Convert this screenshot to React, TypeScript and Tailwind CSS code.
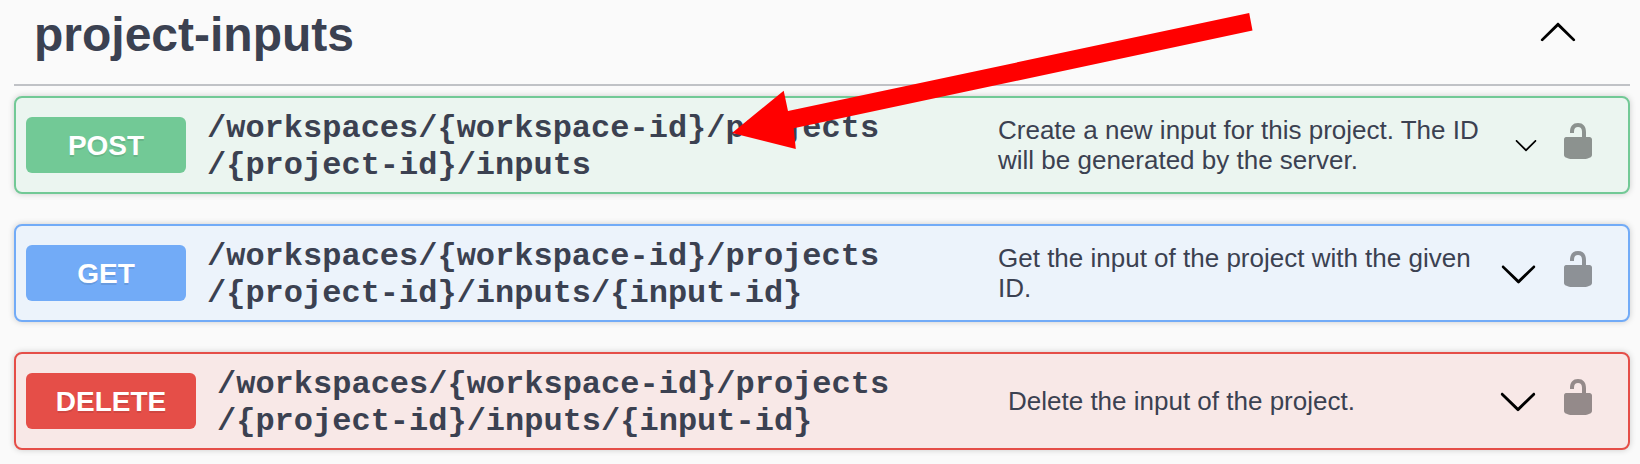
const CHEVRON_DOWN =
  'M17.418 6.109c.272-.268.709-.268.979 0s.271.701 0 .969l-7.908 7.83c-.27.268-.707.268-.979 0l-7.908-7.83c-.27-.268-.27-.701 0-.969.271-.268.709-.268.979 0L10 13.25l7.418-7.141z';
const CHEVRON_UP =
  'M17.418 14.908c.272.268.709.268.979 0s.271-.701 0-.969l-7.908-7.83c-.27-.268-.707-.268-.979 0l-7.908 7.83c-.27.268-.27.701 0 .969.271.268.709.268.979 0L10 7.767l7.418 7.141z';
const UNLOCKED =
  'M15.8 8H14V5.6C14 2.703 12.665 1 10 1 7.334 1 6 2.703 6 5.6V6h2v-.801C8 3.754 8.797 3 10 3c1.203 0 2 .754 2 2.199V8H4c-.553 0-1 .646-1 1.199V17c0 .549.428 1.139.951 1.307l1.197.387C5.672 18.861 6.55 19 7.1 19h5.8c.549 0 1.428-.139 1.951-.307l1.196-.387c.524-.167.953-.757.953-1.306V9.199C17 8.646 16.352 8 15.8 8z';

function Icon({ d, className }: { d: string; className: string }) {
  return (
    <svg viewBox="0 0 20 20" className={`shrink-0 fill-black ${className}`} aria-hidden="true">
      <path d={d} />
    </svg>
  );
}

interface Operation {
  method: string;
  path: string[];
  summary: string[];
  card: string;
  badge: string;
  chevron: string;
}

const OPERATIONS: Operation[] = [
  {
    method: 'POST',
    path: ['/workspaces/{workspace-id}/projects', '/{project-id}/inputs'],
    summary: ['Create a new input for this project. The ID', 'will be generated by the server.'],
    card: 'border-[#72c996] bg-[#ebf5f0]',
    badge: 'w-40 bg-[#72c996]',
    chevron: 'size-6 mr-5',
  },
  {
    method: 'GET',
    path: ['/workspaces/{workspace-id}/projects', '/{project-id}/inputs/{input-id}'],
    summary: ['Get the input of the project with the given', 'ID.'],
    card: 'border-[#72abf7] bg-[#ecf3fb]',
    badge: 'w-40 bg-[#72abf7]',
    chevron: 'size-[39px] mr-5',
  },
  {
    method: 'DELETE',
    path: ['/workspaces/{workspace-id}/projects', '/{project-id}/inputs/{input-id}'],
    summary: ['Delete the input of the project.'],
    card: 'border-[#e54e48] bg-[#f8e8e7]',
    badge: 'w-[170px] bg-[#e54e48]',
    chevron: 'size-10 mr-5',
  },
];

function OperationRow({ op }: { op: Operation }) {
  return (
    <div
      className={`flex h-[98px] items-center rounded-lg border-2 pl-2.5 pr-[30px] shadow-[0_0_6px_rgba(0,0,0,0.19)] ${op.card}`}
    >
      <span
        className={`flex h-14 shrink-0 items-center justify-center rounded-md pt-0.5 text-[28px] leading-8 font-bold text-white [text-shadow:0_2px_0_rgba(0,0,0,0.1)] ${op.badge}`}
      >
        {op.method}
      </span>
      <span className="ml-[21px] w-[791px] shrink-0 pt-[3px] font-['Liberation_Mono',monospace] text-[32px] leading-[37px] font-bold whitespace-nowrap">
        {op.path.map((line) => (
          <span key={line} className="block">{line}</span>
        ))}
      </span>
      <span className="grow text-[26px] leading-[30px] whitespace-nowrap">
        {op.summary.map((line) => (
          <span key={line} className="block">{line}</span>
        ))}
      </span>
      <Icon d={CHEVRON_DOWN} className={op.chevron} />
      <Icon d={UNLOCKED} className="mb-2 size-10 opacity-40" />
    </div>
  );
}

export default function App() {
  return (
    <main className="relative h-[464px] w-[1640px] overflow-hidden bg-[#fafafa] pr-2.5 pl-3.5 font-['Liberation_Sans',Arial,sans-serif] text-[#3b4151]">
      <header className="mb-2.5 flex h-[86px] items-start justify-between border-b-2 border-[#3b4151]/30 pt-[7px] pr-[52px] pl-5">
        <h1 className="text-[48px] leading-[56px] font-bold">project-inputs</h1>
        <Icon d={CHEVRON_UP} className="mt-1 size-10" />
      </header>
      <section className="flex flex-col gap-[30px]">
        {OPERATIONS.map((op) => (
          <OperationRow key={op.method} op={op} />
        ))}
      </section>
      <svg viewBox="0 0 1640 464" className="pointer-events-none absolute inset-0 h-full w-full" aria-hidden="true">
        <polygon
          points="732,133 783.7,90.7 788,111 1249.2,13 1252.5,30.5 793.7,128.3 795.8,149"
          fill="#ff0000"
        />
      </svg>
    </main>
  );
}
